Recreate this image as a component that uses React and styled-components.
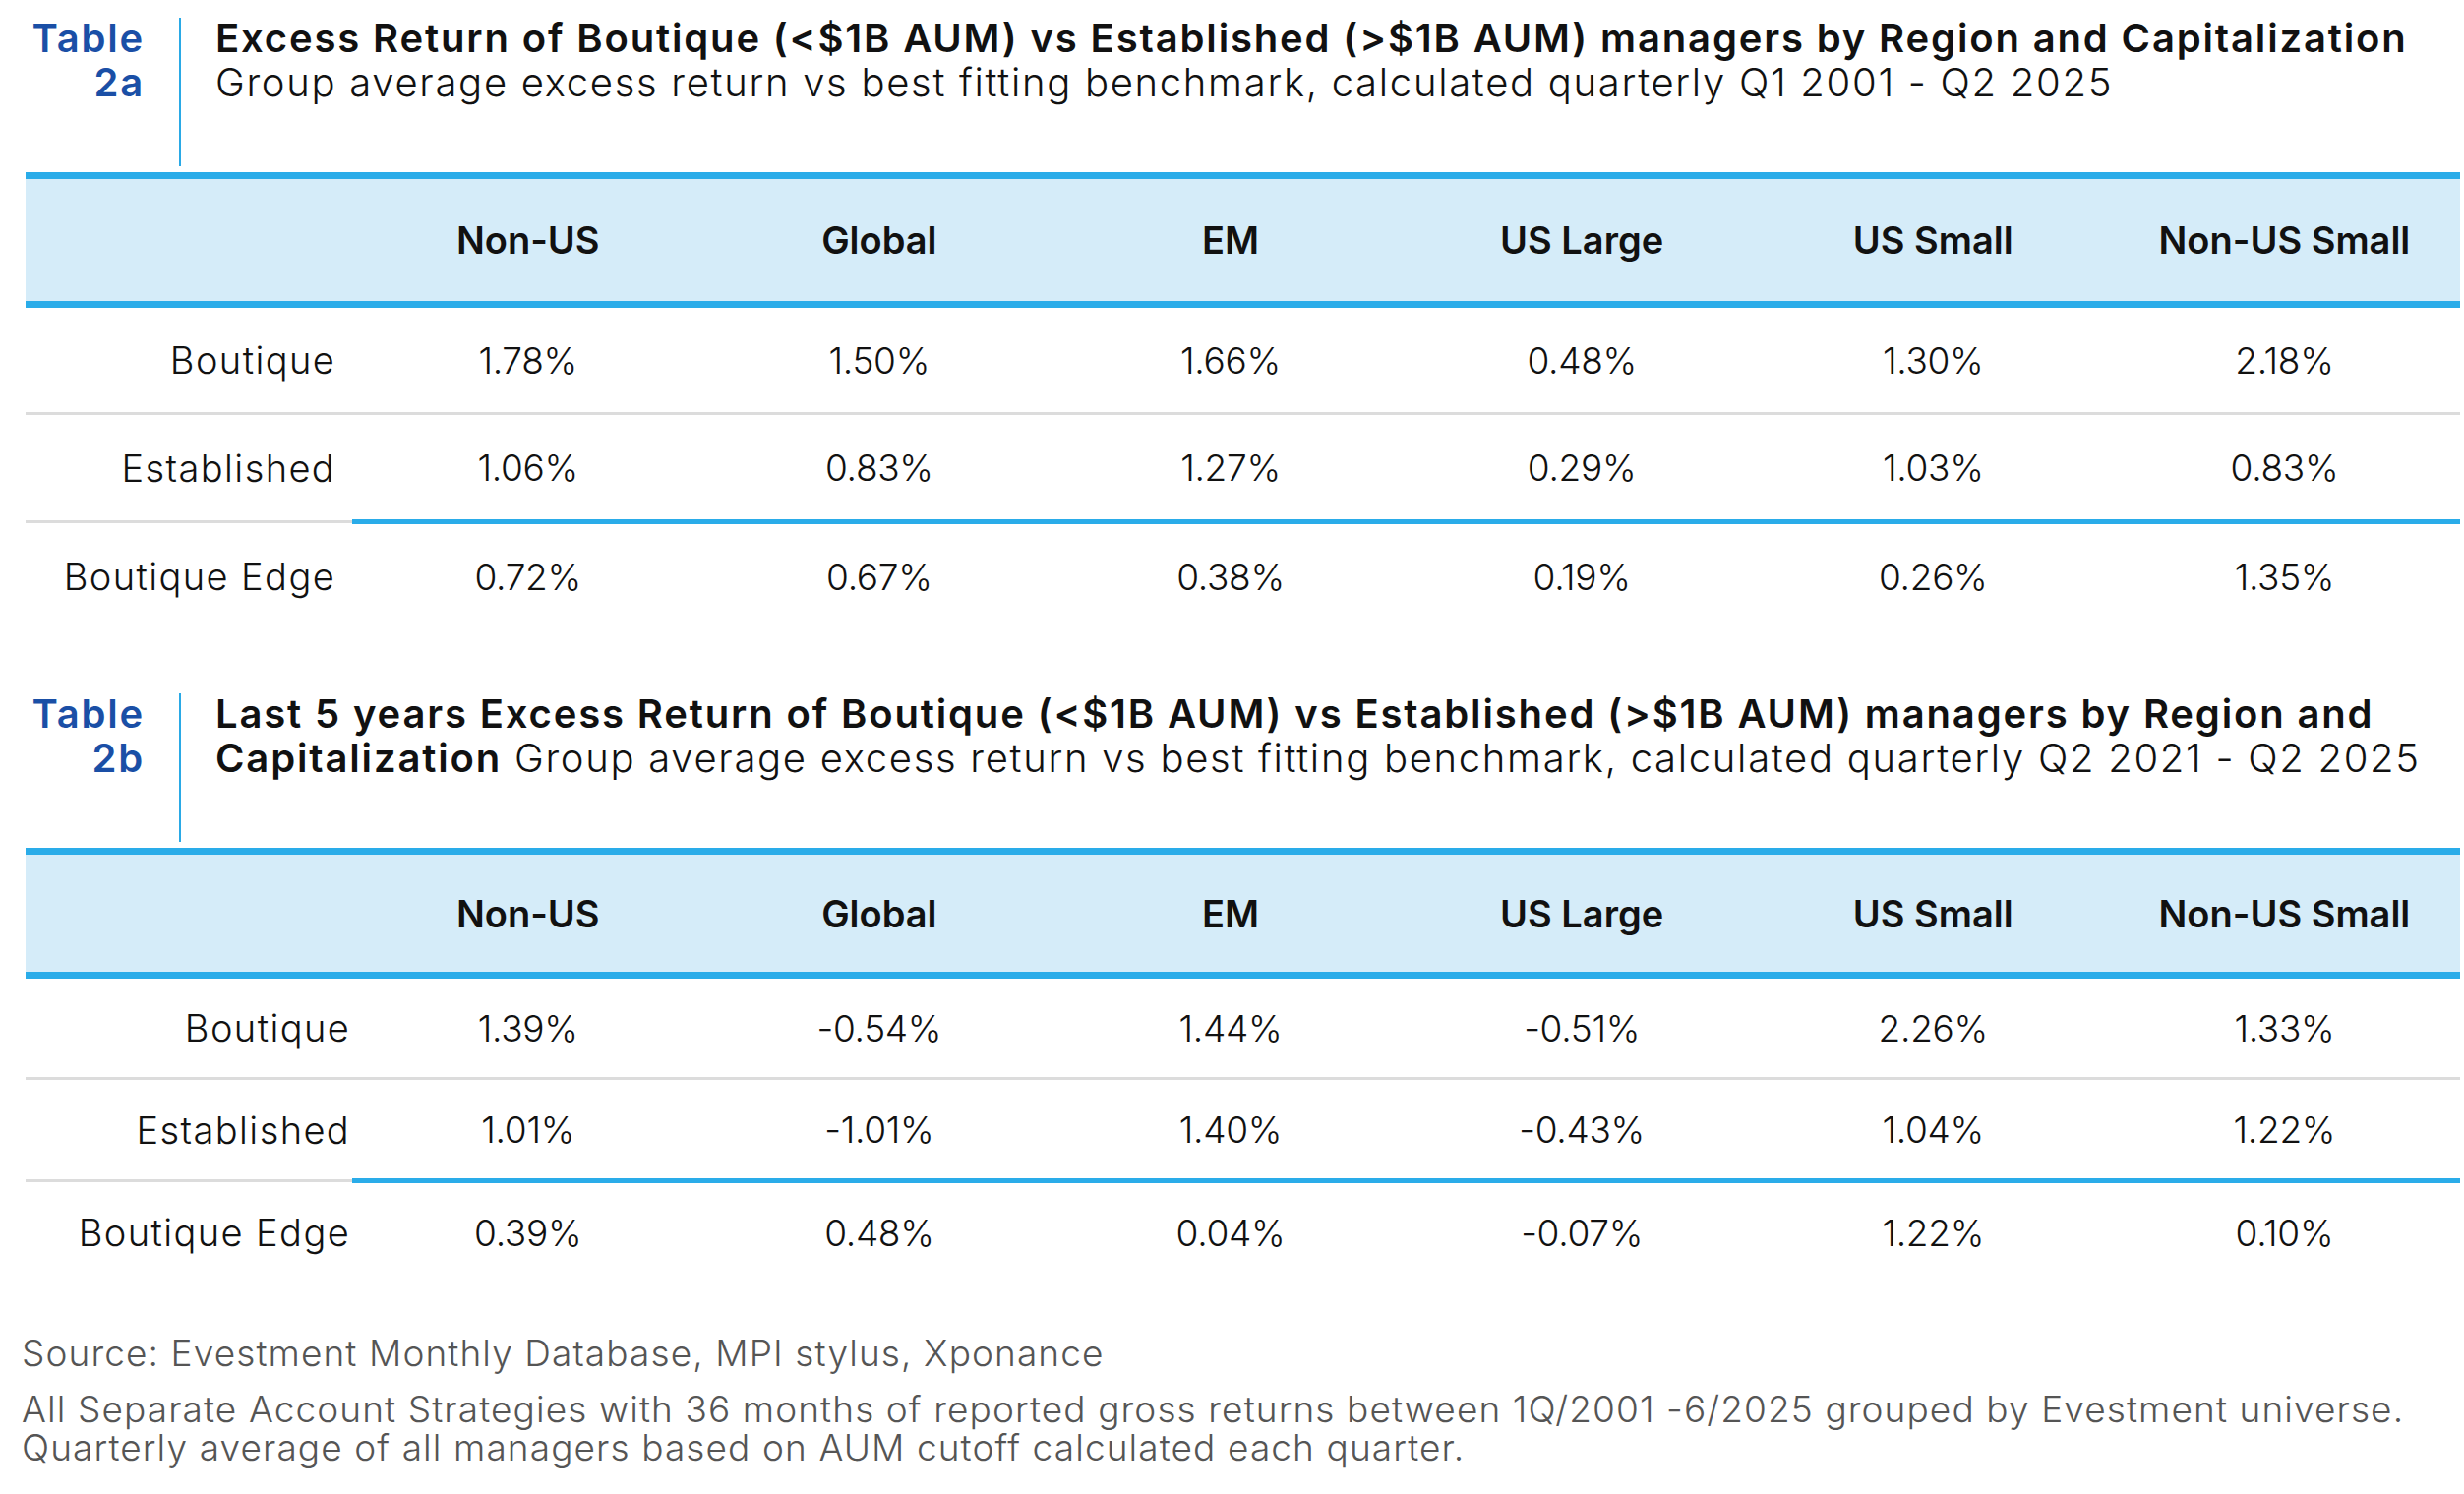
import React from "react";
import styled, { createGlobalStyle } from "styled-components";

const GlobalStyle = createGlobalStyle`
  html, body {
    margin: 0;
    padding: 0;
    background: #fff;
  }
  body {
    font-family: Inter, "Noto Sans", sans-serif;
    color: #111;
  }
`;

const Page = styled.div`
  width: 2505px;
  padding: 18px 4px 0 26px;
  box-sizing: border-box;
`;

const TitleBlock = styled.div`
  display: flex;
  align-items: stretch;
  height: 151px;
  margin-top: ${(p) => p.$top || 0}px;
`;

const TableNo = styled.div`
  width: 121px;
  margin-right: -2px;
  margin-top: -2px;
  text-align: right;
  color: #1a4fa6;
  font-weight: 600;
  font-size: 40px;
  line-height: 45px;
  letter-spacing: 1.8px;
`;

const Divider = styled.div`
  width: 2px;
  background: #2aa9e6;
  margin: 0 35px 0 37px;
`;

const Heading = styled.div`
  font-size: 40px;
  line-height: 45px;
  font-weight: 300;
  letter-spacing: 1.7px;
  white-space: nowrap;
  margin-top: -2px;

  strong {
    font-weight: 600;
    letter-spacing: 1.85px;
  }
`;

const Table = styled.table`
  width: 2475px;
  table-layout: fixed;
  border-collapse: collapse;
  margin-top: 6px;
`;

const HeaderRow = styled.tr`
  background: #d5ecf9;
  border-top: 7px solid #2aace9;
  border-bottom: 7px solid #2aace9;
`;

const HeaderCell = styled.th`
  height: ${(p) => p.$h}px;
  padding: 0;
  text-align: center;
  font-size: 38px;
  font-weight: 600;
  color: #111;
`;

const Cell = styled.td`
  height: ${(p) => p.$h}px;
  padding: 0;
  text-align: center;
  font-size: 37px;
  font-weight: 300;
  letter-spacing: -0.3px;
  border-bottom: ${(p) =>
    p.$rule === "blue"
      ? "5px solid #2aace9"
      : p.$rule === "grey"
      ? "3px solid #dcdcdc"
      : "none"};
`;

const LabelCell = styled(Cell)`
  text-align: right;
  font-size: 38px;
  letter-spacing: 1.4px;
  padding-right: ${(p) => p.$pad - 1}px;
`;

const Footer = styled.div`
  margin-top: ${(p) => p.$top}px;
  margin-left: -4px;
  color: #555;
  font-size: 37px;
  font-weight: 300;
  line-height: 39px;
  letter-spacing: 1.1px;
`;

const Note = styled.p`
  margin: 0 0 18px;
`;

const columns = ["Non-US", "Global", "EM", "US Large", "US Small", "Non-US Small"];

const tableA = [
  ["Boutique", "1.78%", "1.50%", "1.66%", "0.48%", "1.30%", "2.18%"],
  ["Established", "1.06%", "0.83%", "1.27%", "0.29%", "1.03%", "0.83%"],
  ["Boutique Edge", "0.72%", "0.67%", "0.38%", "0.19%", "0.26%", "1.35%"],
];

const tableB = [
  ["Boutique", "1.39%", "-0.54%", "1.44%", "-0.51%", "2.26%", "1.33%"],
  ["Established", "1.01%", "-1.01%", "1.40%", "-0.43%", "1.04%", "1.22%"],
  ["Boutique Edge", "0.39%", "0.48%", "0.04%", "-0.07%", "1.22%", "0.10%"],
];

function DataTable({ rows, headHeight, rowHeight, labelPad }) {
  return (
    <Table>
      <colgroup>
        <col style={{ width: 332 }} />
        {columns.map((c) => (
          <col key={c} style={{ width: 357 }} />
        ))}
      </colgroup>
      <thead>
        <HeaderRow>
          <HeaderCell $h={headHeight} />
          {columns.map((c) => (
            <HeaderCell key={c} $h={headHeight}>
              {c}
            </HeaderCell>
          ))}
        </HeaderRow>
      </thead>
      <tbody>
        {rows.map((row, i) => (
          <tr key={row[0]}>
            <LabelCell
              $h={rowHeight}
              $pad={labelPad}
              $rule={i === 0 || i === 1 ? "grey" : "none"}
            >
              {row[0]}
            </LabelCell>
            {row.slice(1).map((v, j) => (
              <Cell
                key={j}
                $h={rowHeight}
                $rule={i === 0 ? "grey" : i === 1 ? "blue" : "none"}
              >
                {v}
              </Cell>
            ))}
          </tr>
        ))}
      </tbody>
    </Table>
  );
}

export default function App() {
  return (
    <Page>
      <GlobalStyle />
      <TitleBlock>
        <TableNo>
          Table
          <br />
          2a
        </TableNo>
        <Divider />
        <Heading>
          <strong>
            Excess Return of Boutique (&lt;$1B AUM) vs Established (&gt;$1B AUM) managers by
            Region and Capitalization
          </strong>
          <br />
          Group average excess return vs best fitting benchmark, calculated quarterly Q1 2001 -
          Q2 2025
        </Heading>
      </TitleBlock>
      <DataTable rows={tableA} headHeight={124} rowHeight={106} labelPad={18} />

      <TitleBlock $top={66}>
        <TableNo>
          Table
          <br />
          2b
        </TableNo>
        <Divider />
        <Heading>
          <strong>
            Last 5 years Excess Return of Boutique (&lt;$1B AUM) vs Established (&gt;$1B AUM)
            managers by Region and
          </strong>
          <br />
          <strong>Capitalization</strong> Group average excess return vs best fitting benchmark,
          calculated quarterly Q2 2021 - Q2 2025
        </Heading>
      </TitleBlock>
      <DataTable rows={tableB} headHeight={119} rowHeight={100} labelPad={3} />

      <Footer $top={53}>
        <Note>Source: Evestment Monthly Database, MPI stylus, Xponance</Note>
        <Note>
          All Separate Account Strategies with 36 months of reported gross returns between
          1Q/2001 -6/2025 grouped by Evestment universe.
          <br />
          Quarterly average of all managers based on AUM cutoff calculated each quarter.
        </Note>
      </Footer>
    </Page>
  );
}
